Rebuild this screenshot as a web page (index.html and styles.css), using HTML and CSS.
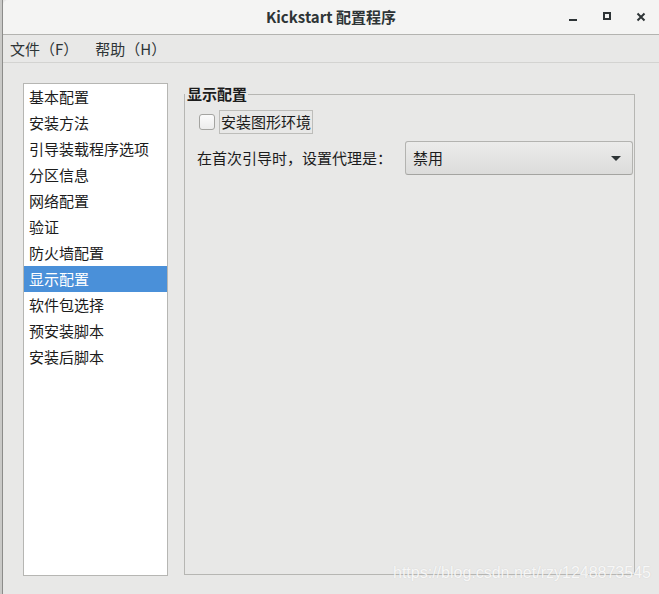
FILE: index.html
```html
<!DOCTYPE html>
<html lang="zh-CN">
<head>
<meta charset="utf-8">
<title>Kickstart 配置程序</title>
<link rel="stylesheet" href="styles.css">
</head>
<body>
<div class="screen">
  <div class="edge"></div>
  <div class="window">
    <header class="titlebar">
      <div class="tb-spacer"></div>
      <div class="tb-title">Kickstart 配置程序</div>
      <div class="tb-controls">
        <span class="tb-btn"><svg width="10" height="10" viewBox="0 0 10 10"><rect x="1" y="7" width="8" height="2" fill="#2e3436"/></svg></span>
        <span class="tb-btn"><svg width="10" height="10" viewBox="0 0 10 10"><rect x="2" y="1" width="6" height="6" fill="none" stroke="#2e3436" stroke-width="2"/></svg></span>
        <span class="tb-btn"><svg width="10" height="10" viewBox="0 0 10 10"><path d="M1.5 1.5 L8.5 8.5 M8.5 1.5 L1.5 8.5" stroke="#2e3436" stroke-width="2"/></svg></span>
      </div>
    </header>
    <nav class="menubar">
      <span class="menu-item">文件（F）</span>
      <span class="menu-item">帮助（H）</span>
    </nav>
    <main class="content">
      <ul class="sidebar">
        <li class="side-item">基本配置</li>
        <li class="side-item">安装方法</li>
        <li class="side-item">引导装载程序选项</li>
        <li class="side-item">分区信息</li>
        <li class="side-item">网络配置</li>
        <li class="side-item">验证</li>
        <li class="side-item">防火墙配置</li>
        <li class="side-item selected">显示配置</li>
        <li class="side-item">软件包选择</li>
        <li class="side-item">预安装脚本</li>
        <li class="side-item">安装后脚本</li>
      </ul>
      <fieldset class="frame">
        <legend class="frame-title">显示配置</legend>
        <div class="frame-body">
          <div class="check-row">
            <span class="checkbox"></span>
            <span class="check-label">安装图形环境</span>
          </div>
          <div class="combo-row">
            <span class="combo-label">在首次引导时，设置代理是：</span>
            <div class="combo">
              <span class="combo-value">禁用</span>
              <svg class="combo-arrow" width="10" height="5" viewBox="0 0 10 5"><path d="M0 0 L10 0 L5 5 Z" fill="#2e3436"/></svg>
            </div>
          </div>
        </div>
      </fieldset>
    </main>
  </div>
</div>
<div class="watermark">https://blog.csdn.net/rzy1248873545</div>
</body>
</html>
```

FILE: styles.css
```css
html, body {
  margin: 0;
  padding: 0;
}
body {
  width: 659px;
  height: 594px;
  overflow: hidden;
  background: #e8e8e7;
  font-family: "Noto Sans CJK SC", "Noto Sans", sans-serif;
  color: #2e3436;
  position: relative;
}
.screen {
  display: flex;
  height: 594px;
}
.edge {
  width: 2px;
  background: #c9c9c7;
  flex: none;
}
.window {
  flex: 1;
  display: flex;
  flex-direction: column;
  border-left: 1px solid #8c8c8a;
  background: #e8e8e7;
  min-width: 0;
}
.titlebar {
  height: 34px;
  flex: none;
  display: grid;
  grid-template-columns: 1fr auto 1fr;
  align-items: center;
  background: #f4f4f3;
  border-bottom: 1px solid #b3b3b0;
  border-top-left-radius: 5px;
}
.tb-title {
  font-size: 15px;
  font-weight: bold;
  line-height: 18px;
  color: #2e3436;
  white-space: nowrap;
}
.tb-controls {
  display: flex;
  justify-content: flex-end;
  padding-right: 1px;
}
.tb-btn {
  width: 34px;
  height: 34px;
  display: flex;
  align-items: center;
  justify-content: center;
}
.menubar {
  height: 27px;
  flex: none;
  display: flex;
  align-items: center;
  gap: 17px;
  padding-left: 7px;
  border-bottom: 1px solid #d3d3d1;
  font-size: 15px;
  line-height: 18px;
}
.content {
  flex: 1;
  display: flex;
  gap: 16px;
  padding: 20px 24px 18px 20px;
  min-height: 0;
}
.sidebar {
  list-style: none;
  margin: 0;
  padding: 0;
  width: 143px;
  flex: none;
  background: #ffffff;
  border: 1px solid #b6b6b3;
}
.side-item {
  height: 26px;
  line-height: 26px;
  padding-left: 5px;
  font-size: 15px;
  color: #1c1c1c;
  white-space: nowrap;
}
.side-item.selected {
  background: #4a90d9;
  color: #ffffff;
}
.frame {
  flex: 1;
  margin: 2px 0 1px 0;
  padding: 0;
  border: 1px solid #b6b6b3;
  min-width: 0;
}
.frame-title {
  font-size: 15px;
  font-weight: bold;
  line-height: 18px;
  padding: 0 1px 0 2px;
  margin-left: 0;
  color: #1c1c1c;
}
.frame-body {
  padding-top: 7px;
  display: flex;
  flex-direction: column;
  gap: 7px;
}
.check-row {
  display: flex;
  align-items: center;
  height: 24px;
  padding-left: 14px;
}
.checkbox {
  width: 14px;
  height: 14px;
  border: 1px solid #a4a4a1;
  border-radius: 3px;
  background: linear-gradient(#fbfbfb, #ececec);
  margin-right: 4px;
}
.check-label {
  height: 22px;
  line-height: 22px;
  border: 1px solid #bdbdba;
  padding: 0 1px;
  font-size: 15px;
  color: #1c1c1c;
  white-space: nowrap;
}
.combo-row {
  display: flex;
  align-items: center;
  padding-left: 12px;
  padding-right: 1px;
}
.combo-label {
  font-size: 15px;
  line-height: 18px;
  color: #1c1c1c;
  white-space: nowrap;
  width: 208px;
  flex: none;
}
.combo {
  flex: 1;
  height: 32px;
  border: 1px solid #b3b3b0;
  border-bottom-color: #a4a4a1;
  border-radius: 3px;
  background: linear-gradient(#ececeb, #dcdcdb);
  display: flex;
  align-items: center;
  justify-content: space-between;
  padding: 0 11px 0 7px;
  box-sizing: content-box;
}
.combo-value {
  font-size: 15px;
  line-height: 18px;
  color: #1c1c1c;
}
.combo-arrow {
  display: block;
}
.watermark {
  position: absolute;
  left: 393px;
  top: 564px;
  font-family: "Liberation Sans", Arial, sans-serif;
  font-size: 16px;
  line-height: 18px;
  color: rgba(255, 255, 255, 0.85);
  text-shadow: 0 0 1px rgba(120, 120, 120, 0.25);
  white-space: nowrap;
}
```
